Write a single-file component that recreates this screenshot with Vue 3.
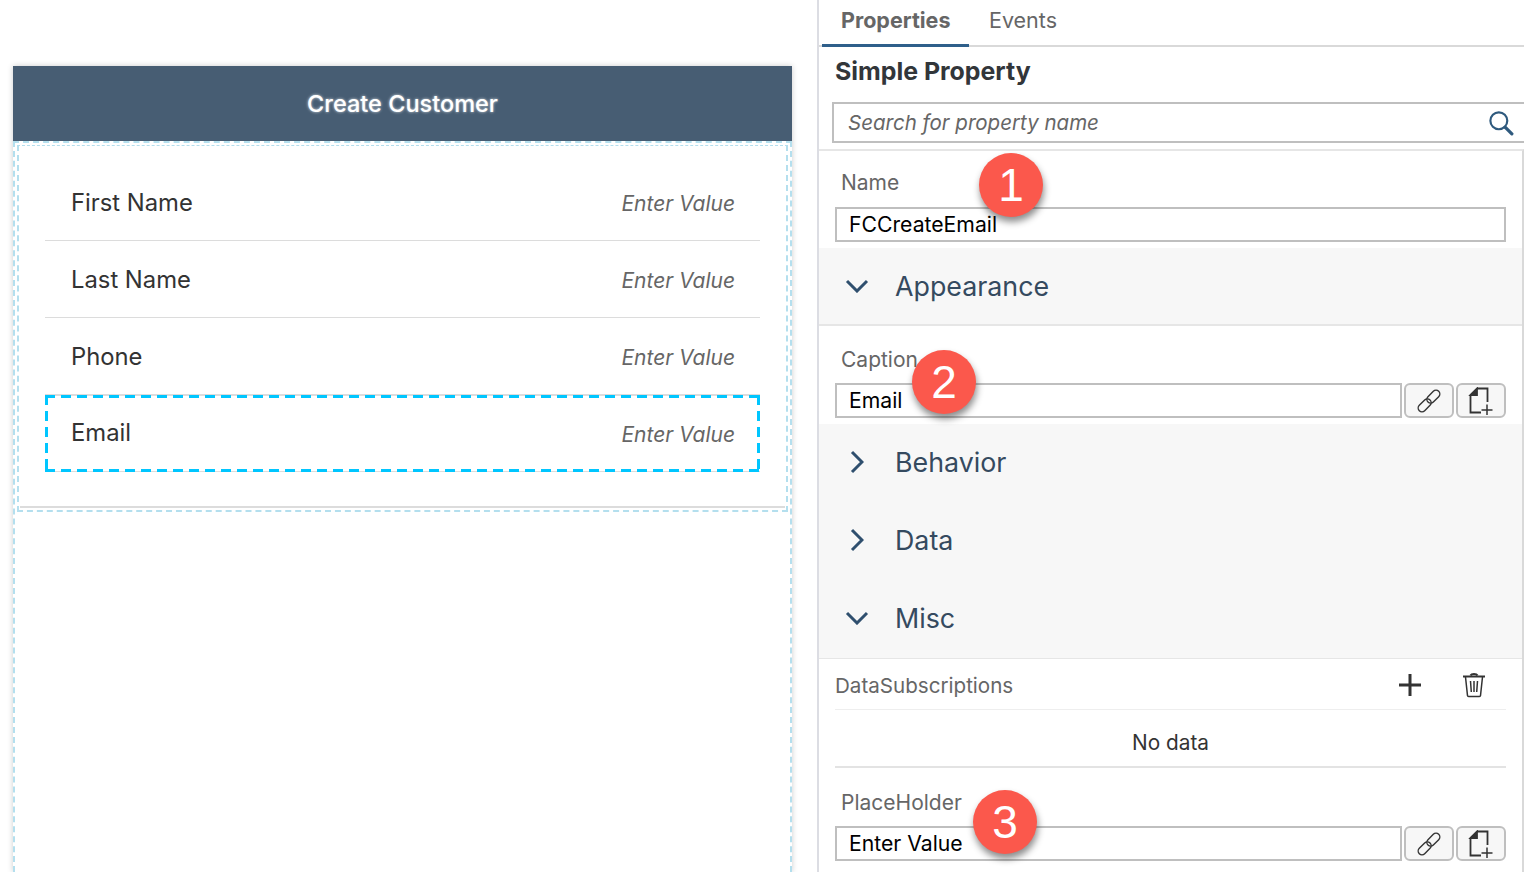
<script setup>
const rows = [
  { label: 'First Name' },
  { label: 'Last Name' },
  { label: 'Phone' },
  { label: 'Email', selected: true }
]
</script>

<template>
  <div class="page">
    <section class="canvas">
      <div class="phone">
        <header class="phone-header">Create Customer</header>
        <div class="form-outer">
          <div class="form-inner">
            <div class="form-list">
              <div
                v-for="row in rows"
                :key="row.label"
                class="form-row"
                :class="{ selected: row.selected }"
              >
                <span class="row-label">{{ row.label }}</span>
                <span class="row-value">Enter Value</span>
              </div>
            </div>
          </div>
        </div>
      </div>
    </section>

    <aside class="panel">
      <div class="tabs">
        <span class="tab active">Properties</span>
        <span class="tab">Events</span>
      </div>
      <h2 class="panel-title">Simple Property</h2>
      <div class="search">
        <span>Search for property name</span>
        <svg class="search-icon" viewBox="0 0 24 24" width="26" height="26" fill="none" stroke="#2f5a7e">
          <circle cx="10" cy="10" r="7.8" stroke-width="2" />
          <path d="M15.800 15.800 22 22" stroke-width="3" stroke-linecap="round" />
        </svg>
      </div>

      <div class="panel-body">
        <div class="field name-field">
          <label>Name</label>
          <div class="input">FCCreateEmail</div>
          <span class="badge badge-1">1</span>
        </div>

        <div class="group group-open">
          <svg class="chev" viewBox="0 0 24 14" width="24" height="14"><path d="M2 2l10 10L22 2" /></svg>
          <span>Appearance</span>
        </div>

        <div class="field caption-field">
          <label>Caption</label>
          <div class="input-row">
            <div class="input">Email</div>
            <button class="icon-btn">
              <svg viewBox="0 0 24 24" width="26" height="26" fill="none" stroke="#333" stroke-width="1.300">
                <rect x="9" y="4.500" width="14" height="7" rx="3.500" transform="rotate(-45 16 8)" />
                <rect x="1" y="12.500" width="14" height="7" rx="3.500" transform="rotate(-45 8 16)" />
              </svg>
            </button>
            <button class="icon-btn">
              <svg viewBox="0 0 26 28" width="26" height="28" fill="none" stroke="#333" stroke-width="1.800">
                <path d="M9 1.500h10.500V15M13 25.500H2.500V8" />
                <path d="M2.500 8l6.500-6.500V8z" fill="#333" />
                <path d="M19 17.500v11M13.500 23h11" stroke-width="1.500" />
              </svg>
            </button>
          </div>
          <span class="badge badge-2">2</span>
        </div>

        <div class="group-block">
          <div class="group">
            <svg class="chev side" viewBox="0 0 14 24" width="14" height="24"><path d="M2 2l10 10L2 22" /></svg>
            <span>Behavior</span>
          </div>
          <div class="group">
            <svg class="chev side" viewBox="0 0 14 24" width="14" height="24"><path d="M2 2l10 10L2 22" /></svg>
            <span>Data</span>
          </div>
          <div class="group">
            <svg class="chev" viewBox="0 0 24 14" width="24" height="14"><path d="M2 2l10 10L22 2" /></svg>
            <span>Misc</span>
          </div>
        </div>

        <div class="subs">
          <div class="subs-head">
            <span>DataSubscriptions</span>
            <svg class="plus" viewBox="0 0 24 24" width="24" height="24"><path d="M12 1v22M1 12h22" stroke="#333" stroke-width="3" /></svg>
            <svg class="trash" viewBox="0 0 24 26" width="24" height="26" fill="none" stroke="#333" stroke-width="1.500">
              <path d="M1 4.500h22" stroke-width="2" />
              <path d="M8.500 3.500c1-2 6-2 7 0" stroke-width="2" />
              <path d="M3.500 5l2 18.500a1.500 1.500 0 0 0 1.500 1h10a1.500 1.500 0 0 0 1.500-1l2-18.500" />
              <path d="M8.500 9l.8 11M12 9v11M15.500 9l-.8 11" />
            </svg>
          </div>
          <div class="no-data">No data</div>
        </div>

        <div class="field place-field">
          <label>PlaceHolder</label>
          <div class="input-row">
            <div class="input">Enter Value</div>
            <button class="icon-btn">
              <svg viewBox="0 0 24 24" width="26" height="26" fill="none" stroke="#333" stroke-width="1.300">
                <rect x="9" y="4.500" width="14" height="7" rx="3.500" transform="rotate(-45 16 8)" />
                <rect x="1" y="12.500" width="14" height="7" rx="3.500" transform="rotate(-45 8 16)" />
              </svg>
            </button>
            <button class="icon-btn">
              <svg viewBox="0 0 26 28" width="26" height="28" fill="none" stroke="#333" stroke-width="1.800">
                <path d="M9 1.500h10.500V15M13 25.500H2.500V8" />
                <path d="M2.500 8l6.500-6.500V8z" fill="#333" />
                <path d="M19 17.500v11M13.500 23h11" stroke-width="1.500" />
              </svg>
            </button>
          </div>
          <span class="badge badge-3">3</span>
        </div>
      </div>
    </aside>
  </div>
</template>

<style>
html, body {
  margin: 0;
  background: #fff;
  overflow: hidden;
}
</style>

<style scoped>
.page {
  display: flex;
  width: 1524px;
  height: 872px;
  overflow: hidden;
  font-family: Inter, "Liberation Sans", sans-serif;
  color: #333;
}

.canvas {
  width: 817px;
  flex: none;
  padding: 66px 25px 0 13px;
  box-sizing: border-box;
}

.phone {
  height: 806px;
  box-shadow: 0 0 6px rgba(0, 0, 0, 0.2);
  display: flex;
  flex-direction: column;
}

.phone-header {
  height: 75px;
  flex: none;
  background: #475d73;
  color: #fff;
  display: flex;
  align-items: center;
  justify-content: center;
  font-size: 23.500px;
  font-weight: 500;
  text-shadow: 0 0 3px rgba(255, 255, 255, 0.8);
  padding-bottom: 1px;
  box-sizing: border-box;
}

.form-outer {
  flex: 1;
  padding: 2px 2px 0;
  border: 2px dashed #b4dfee;
  border-bottom: none;
  background: #fff;
}

.form-inner {
  height: 367px;
  box-sizing: border-box;
  border: 2px dashed #b4dfee;
  border-top-width: 1px;
  padding: 18px 1px 0;
}

.form-list {
  height: 344px;
  box-sizing: border-box;
  border-bottom: 2px solid #dcdcdc;
  padding: 0 25px;
}

.form-row {
  height: 77px;
  box-sizing: border-box;
  border-bottom: 1px solid #dcdcdc;
  padding: 0 25px 0 26px;
  display: flex;
  align-items: center;
  justify-content: space-between;
}

.form-row.selected {
  border-bottom: none;
  background-image:
    linear-gradient(90deg, #00c6ff 10px, transparent 10px),
    linear-gradient(90deg, #00c6ff 10px, transparent 10px),
    linear-gradient(#00c6ff 10px, transparent 10px),
    linear-gradient(#00c6ff 10px, transparent 10px),
    linear-gradient(#dcdcdc, #dcdcdc),
    linear-gradient(#dcdcdc, #dcdcdc);
  background-size: 16px 3px, 16px 3px, 3px 16px, 3px 16px, 100% 1px, 100% 1px;
  background-position: 0 0, 0 100%, 0 0, 100% 0, 0 0, 0 100%;
  background-repeat: repeat-x, repeat-x, repeat-y, repeat-y, no-repeat, no-repeat;
}

.selected .row-label {
  margin-top: -3px;
}

.selected .row-value {
  margin-top: 1px;
}

.row-label {
  font-size: 23.800px;
  color: #333;
  margin-top: 1px;
}

.row-value {
  font-size: 21px;
  font-style: italic;
  color: #666;
  margin-top: 2px;
}

.panel {
  flex: 1;
  border-left: 2px solid #dcdde3;
  position: relative;
  min-width: 0;
}

.tabs {
  border-bottom: 2px solid #d9d9d9;
  padding-left: 3px;
  display: flex;
  box-sizing: border-box;
  height: 47px;
}

.tab {
  font-size: 21.500px;
  color: #666;
  padding: 6px 20px 0 20px;
  line-height: 28px;
}

.tab.active {
  font-weight: 700;
  padding-left: 19px;
  border-bottom: 3px solid #2f5f8a;
  margin-bottom: -2px;
  width: 108px;
}

.panel-title {
  margin: 0;
  font-size: 24.900px;
  font-weight: 700;
  color: #32363a;
  line-height: 34px;
  padding: 7px 0 0 16px;
  height: 48px;
  box-sizing: border-box;
}

.search {
  margin: 7px 0 0 13px;
  height: 41px;
  box-sizing: border-box;
  border: 2px solid #bfbfbf;
  border-right: none;
  display: flex;
  align-items: center;
  justify-content: space-between;
  padding: 0 10px 0 14px;
  font-size: 20.500px;
  font-style: italic;
  color: #666;
}

.panel-body {
  margin-top: 6px;
  border-top: 2px solid #e6e6e6;
  border-right: 2px solid #d9d9d9;
  height: 724px;
  box-sizing: border-box;
}

.field {
  position: relative;
  padding: 0 16px;
}

.field label {
  display: block;
  font-size: 21px;
  color: #666;
  line-height: 28px;
  padding-left: 6px;
  margin-bottom: 9px;
}

.name-field label {
  margin-bottom: 10px;
}

.name-field {
  padding-top: 18px;
  height: 97px;
  box-sizing: border-box;
}

.input {
  height: 35px;
  box-sizing: border-box;
  border: 2px solid #bfbfbf;
  padding-left: 12px;
  font-size: 21.200px;
  line-height: 31px;
  color: #000;
  background: #fff;
}

.input-row {
  display: flex;
  gap: 2px;
}

.input-row .input {
  flex: 1;
}

.icon-btn {
  width: 50px;
  height: 35px;
  flex: none;
  padding: 0;
  border: 2px solid #bfbfbf;
  border-radius: 6px;
  background: #f7f7f7;
  display: flex;
  align-items: center;
  justify-content: center;
}

.group {
  height: 78px;
  display: flex;
  align-items: center;
  gap: 26px;
  padding-left: 26px;
  background: #f7f7f7;
  font-size: 26.800px;
  color: #354a5f;
}

.group-block .group {
  box-sizing: border-box;
  padding-bottom: 2px;
}

.group-open {
  border-bottom: 2px solid #e6e6e6;
  box-sizing: border-box;
}

.chev {
  width: 24px;
  flex: none;
  fill: none;
  stroke: #2f4f6e;
  stroke-width: 3;
}

.chev.side {
  width: 14px;
  margin: 0 5px;
}

.caption-field {
  padding-top: 20px;
  height: 98px;
  box-sizing: border-box;
}

.group-block {
  height: 235px;
  background: #f7f7f7;
  border-bottom: 2px solid #e6e6e6;
  box-sizing: border-box;
}

.subs {
  padding: 0 16px;
}

.subs-head {
  height: 51px;
  padding-top: 2px;
  box-sizing: border-box;
  border-bottom: 1px solid #eee;
  display: flex;
  align-items: center;
  font-size: 20.600px;
  color: #666;
}

.subs-head span {
  flex: 1;
}

.plus {
  margin-right: 40px;
}

.trash {
  margin-right: 20px;
}

.no-data {
  height: 58px;
  box-sizing: border-box;
  padding-top: 8px;
  border-bottom: 2px solid #e3e3e3;
  display: flex;
  align-items: center;
  justify-content: center;
  font-size: 20.800px;
  color: #333;
}

.place-field {
  padding-top: 21px;
}

.badge {
  position: absolute;
  width: 64px;
  height: 64px;
  border-radius: 50%;
  background: #fb584c;
  color: #fff;
  font-family: "Liberation Sans", sans-serif;
  font-size: 46px;
  line-height: 64px;
  text-align: center;
  box-shadow: 1px 5px 7px rgba(0, 0, 0, 0.45);
}

.badge-1 { left: 160px; top: 2px; }
.badge-2 { left: 93px; top: 24px; }
.badge-3 { left: 154px; top: 22px; }
</style>
